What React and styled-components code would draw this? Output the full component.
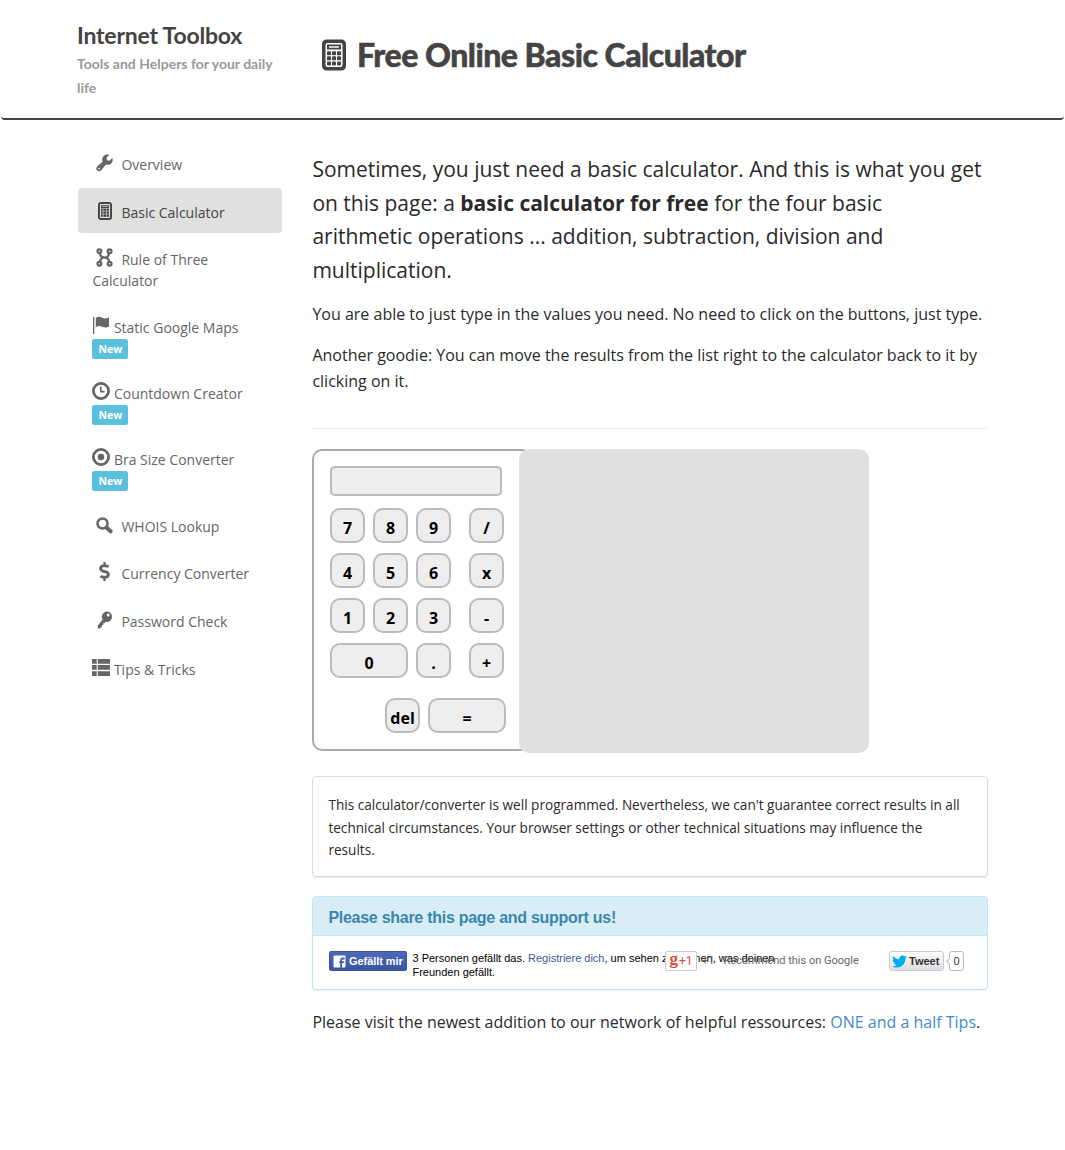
import React from "react";
import styled, { createGlobalStyle } from "styled-components";
import { FaDollarSign, FaTwitter } from "react-icons/fa";

const GlobalStyle = createGlobalStyle`
  *, *::before, *::after { box-sizing: border-box; }
  body {
    margin: 0;
    background: #fff;
    color: #2a2a2a;
    font: 16px/26px "Open Sans", "Noto Sans", sans-serif;
  }
  a { color: #428bca; text-decoration: none; }
`;

const Page = styled.div`
  width: 1065px;
  height: 1150px;
  overflow: hidden;
`;

const Header = styled.header`
  display: flex;
  height: 120px;
  margin: 0 1px;
  padding-left: 76px;
  border-bottom: 2px solid #444;
  border-radius: 4px;
  font-family: Lato, "Open Sans", sans-serif;
  color: #444;
`;

const Brand = styled.div`
  width: 244px;
  padding-top: 20px;
`;

const BrandName = styled.div`
  margin-bottom: 2px;
  font-size: 23px;
  line-height: 30px;
  font-weight: 700;
  letter-spacing: -0.2px;
  white-space: nowrap;
`;

const Tagline = styled.div`
  width: 205px;
  font-size: 14px;
  line-height: 24px;
  font-weight: 700;
  color: #999;
`;

const Title = styled.h1`
  display: flex;
  gap: 10px;
  margin: 0;
  padding-top: 35px;
  font-size: 32px;
  line-height: 40px;
  font-weight: 900;
  letter-spacing: -0.5px;
  -webkit-text-stroke: 0.5px #444;
  white-space: nowrap;
  svg { margin-top: 4px; }
`;

const Columns = styled.div`
  display: flex;
  gap: 30px;
  padding: 20px 77px 0 78px;
`;

const Nav = styled.nav`
  flex: 0 0 204.4px;
  display: flex;
  flex-direction: column;
  gap: 2px;
`;

const NavItem = styled.div`
  height: ${(p) => p.$height}px;
  padding: 14px 14px 0 14.4px;
  border-radius: 4px;
  background: ${(p) => (p.$active ? "#e0e0e0" : "transparent")};
  color: ${(p) => (p.$active ? "#444" : "#666")};
  font-size: 14px;
  line-height: 21px;
`;

const IconBox = styled.span`
  display: inline-flex;
  justify-content: center;
  align-items: center;
  width: ${(p) => (p.$wide ? 18 : 24.5)}px;
  height: 19px;
  margin: -6px ${(p) => (p.$wide ? 3.5 : 4.5)}px 0 0;
  vertical-align: ${(p) => (p.$wide ? -1 : -2)}px;
`;

const Badge = styled.span`
  display: block;
  width: 36px;
  height: 20px;
  margin-top: 1px;
  border-radius: 2.5px;
  background: #5bc0de;
  color: #fff;
  font-size: 10.5px;
  line-height: 20px;
  font-weight: 700;
  text-align: center;
`;

const Main = styled.main`
  width: 675.6px;
  padding-top: 13px;
`;

const Lead = styled.p`
  max-width: 672px;
  margin: 0 0 14px;
  font-size: 21px;
  line-height: 33.6px;
`;

const Para = styled.p`
  margin: 0 0 15px;
`;

const Rule = styled.hr`
  margin: 34px 0 20px;
  border: 0;
  border-top: 1px solid #eee;
`;

const Calculator = styled.section`
  display: flex;
  height: 304px;
`;

const Keypad = styled.div`
  width: 220px;
  height: 302px;
  padding: 15px 0 0 15.2px;
  border: 2px solid #aaa;
  border-radius: 10px;
`;

const Display = styled.div`
  width: 172px;
  height: 30px;
  margin-bottom: 12px;
  border: 2px solid #bbb;
  border-radius: 5px;
  background: #eee;
`;

const KeyRow = styled.div`
  display: flex;
  gap: 8px;
  margin-bottom: 10px;
  ${(p) => p.$last && "margin: 20px 0 0 55px;"}
`;

const Key = styled.button`
  width: ${(p) => (p.$double ? 78 : 35)}px;
  height: 35px;
  padding: 6px 0 0 1px;
  border: 2px solid #bbb;
  border-radius: 10px;
  background: #eee;
  color: #000;
  font: 700 16px/25px "Open Sans", sans-serif;
  white-space: nowrap;
  margin-left: ${(p) => (p.$operator ? 10 : 0)}px;
`;

const Results = styled.div`
  width: 350px;
  height: 304px;
  margin-left: -13.4px;
  border-radius: 10px;
  background: #e0e0e0;
`;

const Notice = styled.div`
  height: 101px;
  margin-top: 23px;
  padding: 17px 24px 0 15px;
  border: 1px solid #ddd;
  border-radius: 4px;
  box-shadow: 0 1px 1px rgba(0, 0, 0, 0.1);
  font-size: 13.6px;
  line-height: 22.5px;
`;

const SharePanel = styled.section`
  height: 94px;
  margin: 19px 0 19px;
  border: 1px solid #bce8f1;
  border-radius: 4px;
  box-shadow: 0 1px 1px rgba(0, 0, 0, 0.06);
  overflow: hidden;
  font-family: "Liberation Sans", Arial, sans-serif;
`;

const ShareTitle = styled.h3`
  height: 39px;
  margin: 0;
  padding-left: 15px;
  border-bottom: 1px solid #bce8f1;
  background: #d9edf7;
  color: #3a87ad;
  font-size: 16px;
  line-height: 41px;
  letter-spacing: -0.27px;
`;

const ShareRow = styled.div`
  display: grid;
  grid-template-columns: 336px 224px auto;
  padding: 15px 0 0 15.6px;
`;

const Widget = styled.div`
  display: flex;
  min-width: 0;
  height: 34px;
  white-space: nowrap;
  position: relative;
`;

const LikeButton = styled.span`
  flex: 0 0 78px;
  display: flex;
  align-items: center;
  gap: 3px;
  height: 20px;
  padding-left: 3px;
  border: 1px solid #3b55a0;
  border-radius: 2px;
  background: linear-gradient(#4c69ba, #3b55a0);
  color: #fff;
  font-size: 11px;
  font-weight: 700;
  letter-spacing: -0.05px;
`;

const LikeText = styled.span`
  margin: 0 0 0 5.5px;
  color: #000;
  font-size: 11px;
  line-height: 14px;
  a { color: #3b5998; }
`;

const PlusButton = styled.span`
  display: flex;
  justify-content: center;
  align-items: center;
  width: 32px;
  height: 20px;
  border: 1px solid #ccc;
  border-radius: 2px;
  background: #fff;
  color: #dd4b39;
  font: 12px/16px Roboto, sans-serif;
  b {
    margin-right: 1px;
    font: 700 17px/14px "Liberation Serif", serif;
    transform: translateY(-2px);
  }
`;

const PlusText = styled.span`
  display: flex;
  gap: 9px;
  margin-left: 5px;
  color: #666;
  font: 11px/19px Roboto, sans-serif;
`;

const TweetButton = styled.span`
  display: flex;
  align-items: center;
  gap: 2px;
  width: 55px;
  height: 20px;
  padding-left: 2px;
  border: 1px solid #ccc;
  border-radius: 3px;
  background: linear-gradient(#fff, #dedede);
  color: #333;
  font-size: 11px;
  font-weight: 700;
  svg { color: #00aced; }
`;

const TweetCount = styled.span`
  position: relative;
  width: 15px;
  height: 20px;
  margin-left: 5px;
  border: 1px solid #bbb;
  border-radius: 3px;
  background: #fff;
  color: #333;
  font-size: 11px;
  line-height: 19px;
  text-align: center;
  &::before {
    content: "";
    position: absolute;
    left: -3px;
    top: 7px;
    width: 5px;
    height: 5px;
    border-left: 1px solid #bbb;
    border-bottom: 1px solid #bbb;
    background: #fff;
    transform: rotate(45deg);
  }
`;

const CalculatorIcon = () => (
  <svg width="26" height="32" viewBox="0 0 25 32">
    <path
      fill="currentColor"
      fillRule="evenodd"
      d="M5 0.5H20A4.5 4.5 0 0 1 24.5 5V27A4.5 4.5 0 0 1 20 31.5H5A4.5 4.5 0 0 1 .5 27V5A4.5 4.5 0 0 1 5 .5ZM6 4A2 2 0 0 0 4 6V26A2 2 0 0 0 6 28H19A2 2 0 0 0 21 26V6A2 2 0 0 0 19 4Z"
    />
    <path d="M5.5 8H19.5" stroke="currentColor" strokeWidth="5" />
    <path d="M7.5 8H17.5" stroke="#ccc" strokeWidth="2" />
    <g fill="currentColor">
      {[12.2, 17.3, 22.4].map((y) =>
        [5.5, 10.5, 15.5].map((x) => <rect key={x + "-" + y} x={x} y={y} width="4" height="4" rx=".8" />)
      )}
    </g>
  </svg>
);

const SmallCalculatorIcon = () => (
  <svg width="14" height="18" viewBox="0 0 14 18" fill="none">
    <rect x="1" y="1" width="12" height="16" rx="2" stroke="currentColor" strokeWidth="2" />
    <rect x="3" y="3" width="8" height="12" fill="currentColor" />
    <path
      d="M2.4 15.2V2.8H11.6V15.2ZM4 4.5H10M3 6.5H11M3 9.2H11M3 12H11M5.2 7V15M8.5 7V15"
      stroke="#e0e0e0"
      strokeWidth=".6"
    />
  </svg>
);

const WrenchIcon = () => (
  <svg width="17" height="18" viewBox="0 0 16 17" fill="currentColor" fillRule="evenodd">
    <path d="M12.4 .9 9.9 3.6 10.4 5.8 12.6 6.3 15.4 3.8C16.3 6.5 15.3 8.6 13.4 9.6 12 10.3 10.5 10.3 9.2 10.1L5.2 15C3.9 16.5 2.2 16.6 1 15.5-.2 14.3 .1 12.4 1.5 11.3L6.2 7.3C5.4 5.2 5.9 3 7.5 1.6 9 .5 10.8 .2 12.4 .9ZM2.9 13A.8 .8 0 1 0 2.9 14.6 .8 .8 0 1 0 2.9 13Z" />
  </svg>
);

const BranchIcon = () => (
  <svg width="17" height="19" viewBox="0 0 17 19" fill="none" stroke="currentColor" strokeWidth="2.3">
    <circle cx="3.4" cy="3.2" r="1.9" />
    <circle cx="13.6" cy="3.2" r="1.9" />
    <circle cx="3.4" cy="15.8" r="1.9" />
    <circle cx="13.6" cy="15.8" r="1.9" />
    <path d="M3.8 5C4.2 8.5 5.5 8.6 8.5 9.5S12.8 10.5 13.2 14M13.2 5C12.8 8 12 8.6 10.2 9.3M3.8 14C4.2 11 5 10.4 6.8 9.7" />
  </svg>
);

const FlagIcon = () => (
  <svg width="18" height="18" viewBox="0 0 18 18" fill="currentColor">
    <path d="M1 1H2.3V18H1ZM3.8 2C7-.3 9.5 1.5 11.5 2.2 13.5 2.9 15 2.4 17 1.3V10.5C14 12.3 12 11.5 10 10.7 7.8 9.8 6 9.8 3.8 11.3Z" />
  </svg>
);

const ClockIcon = () => (
  <svg width="18" height="18" viewBox="0 0 18 18" fill="none" stroke="currentColor">
    <circle cx="9" cy="9" r="7.6" strokeWidth="2.8" />
    <path d="M8.8 4.5V9.6H12.5" strokeWidth="1.6" />
  </svg>
);

const TargetIcon = () => (
  <svg width="18" height="18" viewBox="0 0 18 18" fill="none" stroke="currentColor">
    <circle cx="9" cy="9" r="7.6" strokeWidth="2.8" />
    <circle cx="9" cy="9" r="3.3" fill="currentColor" stroke="none" />
  </svg>
);

const SearchIcon = () => (
  <svg width="17" height="17" viewBox="0 0 17 17" fill="none" stroke="currentColor">
    <circle cx="6.5" cy="6.5" r="5" strokeWidth="2.5" />
    <path d="M10.5 10.5L14.6 14.3" strokeWidth="4" strokeLinecap="round" />
  </svg>
);

const KeyIcon = () => (
  <svg width="16" height="18" viewBox="0 0 16 18" fill="currentColor" fillRule="evenodd">
    <path d="M10 .5A5 5 0 0 1 15 5.5 5.2 5.2 0 0 1 8.8 10.8L7.4 12.3H6.3V14H5V15.5L3 17.5H.8V14.5L5.6 8.5A5.2 5.2 0 0 1 10 .5ZM11.2 2.6A1.5 1.5 0 1 0 11.2 5.6 1.5 1.5 0 1 0 11.2 2.6Z" />
  </svg>
);

const ListIcon = () => (
  <svg width="18" height="17" viewBox="0 0 18 17" fill="currentColor">
    <path d="M0 0H4.7V4.7H0ZM5.8 0H18V4.7H5.8ZM0 6.1H4.7V10.8H0ZM5.8 6.1H18V10.8H5.8ZM0 12.2H4.7V17H0ZM5.8 12.2H18V17H5.8Z" />
  </svg>
);

const FacebookIcon = () => (
  <svg width="13" height="13" viewBox="0 0 13 13">
    <rect x=".5" y=".5" width="12" height="12" rx="1" fill="#fff" />
    <path d="M8.1 13V5.2Q8.1 3.5 9.8 3.5H11.6M6.2 7.2H11.2" fill="none" stroke="#435fae" strokeWidth="1.8" />
  </svg>
);

const navigation = [
  { label: "Overview", height: 46, icon: <WrenchIcon /> },
  { label: "Basic Calculator", height: 45, icon: <SmallCalculatorIcon />, active: true },
  { label: "Rule of Three Calculator", height: 66, icon: <BranchIcon /> },
  { label: "Static Google Maps", height: 64, icon: <FlagIcon />, wide: true, isNew: true },
  { label: "Countdown Creator", height: 64, icon: <ClockIcon />, wide: true, isNew: true },
  { label: "Bra Size Converter", height: 65, icon: <TargetIcon />, wide: true, isNew: true },
  { label: "WHOIS Lookup", height: 45, icon: <SearchIcon /> },
  { label: "Currency Converter", height: 46, icon: <FaDollarSign size={19} /> },
  { label: "Password Check", height: 46, icon: <KeyIcon /> },
  { label: "Tips & Tricks", height: 46, icon: <ListIcon />, wide: true },
];

const keys = [
  ["7", "8", "9", "/"],
  ["4", "5", "6", "x"],
  ["1", "2", "3", "-"],
  ["0", ".", "+"],
];

export default function App() {
  return (
    <Page>
      <GlobalStyle />
      <Header>
        <Brand>
          <BrandName>Internet Toolbox</BrandName>
          <Tagline>Tools and Helpers for your daily life</Tagline>
        </Brand>
        <Title>
          <CalculatorIcon />
          Free Online Basic Calculator
        </Title>
      </Header>
      <Columns>
        <Nav>
          {navigation.map((item) => (
            <NavItem key={item.label} $height={item.height} $active={item.active}>
              <IconBox $wide={item.wide}>{item.icon}</IconBox>
              {item.label}
              {item.isNew && <Badge>New</Badge>}
            </NavItem>
          ))}
        </Nav>
        <Main>
          <Lead>
            Sometimes, you just need a basic calculator. And this is what you get on this page: a{" "}
            <b>basic calculator for free</b> for the four basic arithmetic operations ... addition, subtraction,
            division and multiplication.
          </Lead>
          <Para>You are able to just type in the values you need. No need to click on the buttons, just type.</Para>
          <Para>
            Another goodie: You can move the results from the list right to the calculator back to it by clicking on it.
          </Para>
          <Rule />
          <Calculator>
            <Keypad>
              <Display />
              {keys.map((row) => (
                <KeyRow key={row[0]}>
                  {row.map((label, i) => (
                    <Key key={label} $double={label === "0"} $operator={i === row.length - 1}>
                      {label}
                    </Key>
                  ))}
                </KeyRow>
              ))}
              <KeyRow $last>
                <Key>del</Key>
                <Key $double>=</Key>
              </KeyRow>
            </Keypad>
            <Results />
          </Calculator>
          <Notice>
            This calculator/converter is well programmed. Nevertheless, we can't guarantee correct results in all
            technical circumstances. Your browser settings or other technical situations may influence the results.
          </Notice>
          <SharePanel>
            <ShareTitle>Please share this page and support us!</ShareTitle>
            <ShareRow>
              <Widget>
                <LikeButton>
                  <FacebookIcon />
                  Gefällt mir
                </LikeButton>
                <LikeText>
                  3 Personen gefällt das. <a>Registriere dich</a>, um sehen zu können, was deinen
                  <br />
                  Freunden gefällt.
                </LikeText>
              </Widget>
              <Widget>
                <PlusButton>
                  <b>g</b>+1
                </PlusButton>
                <PlusText>
                  <span>+1</span>
                  <span>Recommend this on Google</span>
                </PlusText>
              </Widget>
              <Widget>
                <TweetButton>
                  <FaTwitter size={15} />
                  Tweet
                </TweetButton>
                <TweetCount>0</TweetCount>
              </Widget>
            </ShareRow>
          </SharePanel>
          <Para>
            Please visit the newest addition to our network of helpful ressources: <a>ONE and a half Tips</a>.
          </Para>
        </Main>
      </Columns>
    </Page>
  );
}
